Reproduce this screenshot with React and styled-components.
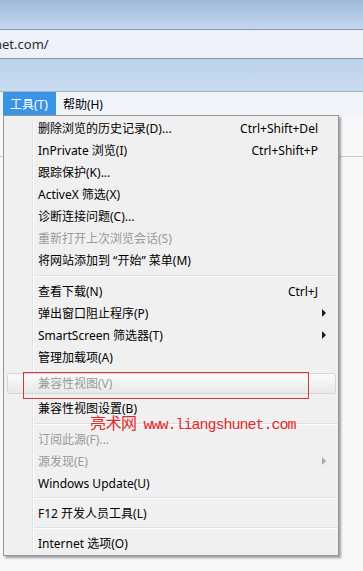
import React from 'react';
import styled, { createGlobalStyle } from 'styled-components';

const GlobalStyle = createGlobalStyle`
  html, body {
    margin: 0;
    padding: 0;
    background: #f6f6f8;
  }
  body {
    font-family: "Noto Sans", "Noto Sans CJK SC", sans-serif;
    font-size: 12px;
    color: #000;
  }
`;

const Window = styled.div`
  width: 363px;
  height: 571px;
  overflow: hidden;
  display: flex;
  flex-direction: column;
`;

const TitleStrip = styled.div`
  height: 29px;
  background: linear-gradient(#a0bbda, #c3d6ed);
`;

const AddressBar = styled.div`
  height: 28px;
  background: #eef2f8;
  border-top: 1px solid #8795a8;
  border-bottom: 1px solid #8c98a8;
  display: flex;
  align-items: center;
  overflow: hidden;
  color: #2a2a2a;
  font-size: 13px;
`;

const Url = styled.span`
  margin-left: -6px;
  white-space: nowrap;
`;

const TabBand = styled.div`
  height: 32px;
  background: linear-gradient(#bcd1eb, #c9dbf0);
  border-bottom: 1px solid #a3b3c6;
`;

const MenuBar = styled.div`
  height: 23px;
  background: #eff4fa;
  display: flex;
  align-items: stretch;
  padding-left: 3px;
`;

const BarItem = styled.div`
  display: flex;
  align-items: center;
  padding: 0 8px 0 7px;
  background: ${p => (p.$open ? '#3b93e5' : 'transparent')};
  color: ${p => (p.$open ? '#fff' : '#000')};
`;

const Page = styled.div`
  position: relative;
  flex: 1;
  background: #f7f7f9;
`;

const PageRule = styled.div`
  margin-top: 41px;
  height: 1px;
  background: #c8c8c8;
`;

const Dropdown = styled.div`
  position: absolute;
  top: 0;
  left: 3px;
  width: 334px;
  padding: 1px 0 1px;
  background: #f0f0f0;
  border: 1px solid #979797;
  box-shadow: 2px 2px 2px rgba(0, 0, 0, 0.35);
`;

const Gutter = styled.div`
  position: absolute;
  top: 1px;
  bottom: 1px;
  left: 28px;
  width: 1px;
  background: #e2e3e3;
  border-right: 1px solid #ffffff;
`;

const Item = styled.div`
  position: relative;
  height: 22px;
  display: flex;
  align-items: center;
  padding: 0 12px 0 34px;
  margin-top: ${p => p.$gapTop || 0}px;
  margin-bottom: ${p => p.$gapBottom || 0}px;
  color: ${p => (p.$disabled ? '#9a9a9a' : '#000')};
  white-space: nowrap;
  ${p =>
    p.$hover &&
    `
    &::before {
      content: "";
      position: absolute;
      top: 1px;
      bottom: 0;
      left: 3px;
      right: 2px;
      border: 1px solid #d6d6d6;
      border-radius: 3px;
      background: linear-gradient(#fbfbfb, #e8e8e8);
    }
  `}
`;

const Label = styled.span`
  position: relative;
  flex: 1;
`;

const Shortcut = styled.span`
  position: relative;
  margin-right: 8px;
`;

const Arrow = styled.span`
  position: relative;
  width: 0;
  height: 0;
  border-top: 4px solid transparent;
  border-bottom: 4px solid transparent;
  border-left: 4px solid ${p => (p.$disabled ? '#a8a8a8' : '#1a1a1a')};
`;

const Separator = styled.div`
  height: ${p => p.$h || 9}px;
  display: flex;
  align-items: center;
  padding-left: 30px;
  &::after {
    content: "";
    flex: 1;
    height: 1px;
    background: #e0e0e0;
    border-bottom: 1px solid #ffffff;
  }
`;

const RedBox = styled.div`
  position: absolute;
  top: 256px;
  left: 19px;
  width: 284px;
  height: 25px;
  border: 1px solid #d23a3a;
`;

const Watermark = styled.div`
  position: absolute;
  top: 294px;
  left: 86px;
  color: #e2292b;
  display: flex;
  align-items: baseline;
  gap: 7px;
  white-space: nowrap;
`;

const MarkCn = styled.span`
  font-family: "Noto Sans CJK SC", sans-serif;
  font-size: 16px;
  letter-spacing: -0.5px;
`;

const MarkUrl = styled.span`
  font-family: "Liberation Mono", monospace;
  font-size: 15px;
  letter-spacing: -1px;
`;

const menu = [
  { label: '删除浏览的历史记录(D)...', shortcut: 'Ctrl+Shift+Del' },
  { label: 'InPrivate 浏览(I)', shortcut: 'Ctrl+Shift+P' },
  { label: '跟踪保护(K)...' },
  { label: 'ActiveX 筛选(X)' },
  { label: '诊断连接问题(C)...' },
  { label: '重新打开上次浏览会话(S)', disabled: true },
  { label: '将网站添加到 “开始” 菜单(M)' },
  { sep: 9 },
  { label: '查看下载(N)', shortcut: 'Ctrl+J' },
  { label: '弹出窗口阻止程序(P)', sub: true },
  { label: 'SmartScreen 筛选器(T)', sub: true },
  { label: '管理加载项(A)' },
  { label: '兼容性视图(V)', disabled: true, hover: true, gapTop: 4, gapBottom: 3 },
  { label: '兼容性视图设置(B)' },
  { sep: 9 },
  { label: '订阅此源(F)...', disabled: true },
  { label: '源发现(E)', disabled: true, sub: true },
  { label: 'Windows Update(U)' },
  { sep: 8 },
  { label: 'F12 开发人员工具(L)' },
  { sep: 8 },
  { label: 'Internet 选项(O)' },
];

export default function App() {
  return (
    <>
      <GlobalStyle />
      <Window>
        <TitleStrip />
        <AddressBar>
          <Url>net.com/</Url>
        </AddressBar>
        <TabBand />
        <MenuBar>
          <BarItem $open>工具(T)</BarItem>
          <BarItem>帮助(H)</BarItem>
        </MenuBar>
        <Page>
          <PageRule />
          <Dropdown>
            <Gutter />
            {menu.map((m, i) =>
              m.sep ? (
                <Separator key={i} $h={m.sep} />
              ) : (
                <Item
                  key={i}
                  $disabled={m.disabled}
                  $hover={m.hover}
                  $gapTop={m.gapTop}
                  $gapBottom={m.gapBottom}
                >
                  <Label>{m.label}</Label>
                  {m.shortcut && <Shortcut>{m.shortcut}</Shortcut>}
                  {m.sub && <Arrow $disabled={m.disabled} />}
                </Item>
              )
            )}
            <RedBox />
            <Watermark>
              <MarkCn>亮术网</MarkCn>
              <MarkUrl>www.liangshunet.com</MarkUrl>
            </Watermark>
          </Dropdown>
        </Page>
      </Window>
    </>
  );
}
